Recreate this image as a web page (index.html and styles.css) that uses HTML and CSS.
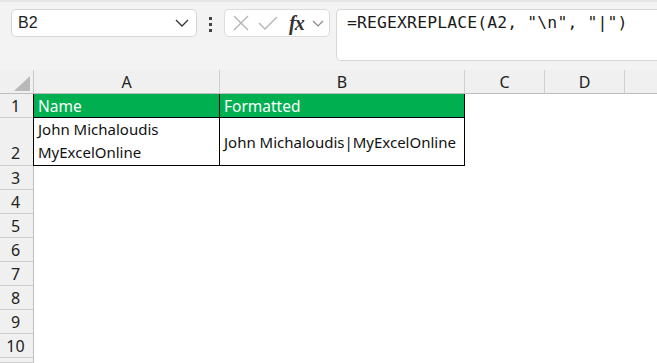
FILE: index.html
```html
<!DOCTYPE html>
<html lang="en">
<head>
    <meta charset="UTF-8">
    <title>REGEXREPLACE</title>
    <link rel="stylesheet" href="styles.css">
</head>
<body>

    <!-- Formula bar -->
    <div class="toolbar">
        <div class="name-box">
            <span>B2</span>
            <svg class="chev" width="14" height="8" viewBox="0 0 14 8"><path d="M1 1 L7 7 L13 1" fill="none" stroke="#333" stroke-width="1.3"/></svg>
        </div>
        <div class="dots"><i></i><i></i><i></i></div>
        <div class="fx-box">
            <svg width="18" height="18" viewBox="0 0 18 18"><path d="M2 2 L16 16 M16 2 L2 16" stroke="#b4b4b4" stroke-width="1.4" fill="none"/></svg>
            <svg width="20" height="16" viewBox="0 0 20 16"><path d="M1 8 L7 14 L19 2" stroke="#b4b4b4" stroke-width="1.4" fill="none"/></svg>
            <span class="fx">fx</span>
            <svg width="12" height="7" viewBox="0 0 12 7"><path d="M1 1 L6 6 L11 1" fill="none" stroke="#888" stroke-width="1.2"/></svg>
        </div>
        <div class="formula">=REGEXREPLACE(A2, "\n", "|")</div>
    </div>

    <!-- Sheet -->
    <div class="sheet">
        <div class="corner"><div class="tri"></div></div>
        <div class="col-head">A</div>
        <div class="col-head">B</div>
        <div class="col-head">C</div>
        <div class="col-head">D</div>
        <div class="col-head last"></div>

        <div class="row-head">1</div>
        <div class="cell head first">Name</div>
        <div class="cell head">Formatted</div>
        <div class="blank"></div><div class="blank"></div><div class="blank"></div>

        <div class="row-head bottom">2</div>
        <div class="cell first wrap">John Michaloudis<br>MyExcelOnline</div>
        <div class="cell mid">John Michaloudis|MyExcelOnline</div>
        <div class="blank"></div><div class="blank"></div><div class="blank"></div>

        <div class="row-head">3</div><div class="blank span"></div>
        <div class="row-head">4</div><div class="blank span"></div>
        <div class="row-head">5</div><div class="blank span"></div>
        <div class="row-head">6</div><div class="blank span"></div>
        <div class="row-head">7</div><div class="blank span"></div>
        <div class="row-head">8</div><div class="blank span"></div>
        <div class="row-head">9</div><div class="blank span"></div>
        <div class="row-head">10</div><div class="blank span"></div>
        <div class="row-head"></div><div class="blank span"></div>
    </div>

</body>
</html>
```

FILE: styles.css
```css
/* Page */
body {
    margin: 0;
    background-color: #ffffff;
    font-family: "Noto Sans", sans-serif;
    overflow: hidden;
    width: 657px;
    height: 363px;
}

/* Top bar */
.toolbar {
    display: flex;
    align-items: flex-start;
    background-color: #f3f3f3;
    border-top: 2px solid #e6e6e6;
    padding: 7px 0 0 11px;
    box-sizing: border-box;
    height: 70px;
}

.name-box {
    width: 186px;
    height: 28px;
    box-sizing: border-box;
    background: #fff;
    border: 1px solid #d6d6d6;
    border-radius: 5px;
    display: flex;
    align-items: center;
    justify-content: space-between;
    padding: 0 7px 0 6px;
    font-family: "Liberation Sans", sans-serif;
    font-size: 16px;
    color: #222;
}

.dots {
    width: 27px;
    display: flex;
    flex-direction: column;
    align-items: center;
    gap: 3px;
    padding-top: 8px;
}

.dots i {
    width: 3px;
    height: 3px;
    background: #444;
}

.fx-box {
    width: 106px;
    height: 28px;
    box-sizing: border-box;
    background: #fff;
    border: 1px solid #dcdcdc;
    border-radius: 5px;
    display: flex;
    align-items: center;
    gap: 8px;
    padding: 0 4px 0 7px;
}

.fx {
    font-family: "Liberation Serif", serif;
    font-style: italic;
    font-weight: bold;
    font-size: 20px;
    color: #333;
    margin-left: 3px;
    letter-spacing: -1px;
    line-height: 1;
}

.formula {
    margin-left: 6px;
    flex: 1;
    height: 52px;
    box-sizing: border-box;
    background: #fff;
    border: 1px solid #d6d6d6;
    border-right: none;
    border-radius: 5px 0 0 5px;
    padding: 3px 0 0 10px;
    font-family: "DejaVu Sans Mono", monospace;
    font-size: 16.4px;
    letter-spacing: 0.15px;
    color: #1a1a1a;
    white-space: pre;
}

/* Grid */
.sheet {
    display: grid;
    grid-template-columns: 34px 186px 245px 80px 80px 1fr;
    grid-template-rows: 24px 24px 48px repeat(8, 24px) 5px;
    font-size: 15px;
}

.corner,
.col-head,
.row-head {
    background-color: #f0f0f0;
    box-sizing: border-box;
    color: #222;
    font-size: 16px;
}

.corner {
    border-right: 1px solid #c8c8c8;
    border-bottom: 1px solid #bdbdbd;
    position: relative;
}

.tri {
    position: absolute;
    right: 3px;
    bottom: 2px;
    width: 0;
    height: 0;
    border-left: 16px solid transparent;
    border-bottom: 15px solid #b9b9b9;
}

.col-head {
    border-right: 1px solid #cfcfcf;
    border-bottom: 1px solid #bdbdbd;
    display: flex;
    align-items: center;
    justify-content: center;
    padding-top: 1px;
}

.col-head.last {
    border-right: none;
}

.row-head {
    border-right: 1px solid #bdbdbd;
    border-bottom: 1px solid #cfcfcf;
    display: flex;
    align-items: center;
    justify-content: center;
    padding-right: 2px;
}

.row-head.bottom {
    align-items: flex-end;
    padding-bottom: 1px;
}

.blank {
    background: #fff;
}

.blank.span {
    grid-column: 2 / 7;
}

.cell {
    box-sizing: border-box;
    border-right: 1px solid #000;
    border-bottom: 1px solid #000;
    padding: 0 4px;
    color: #111;
    display: flex;
    align-items: center;
    white-space: nowrap;
}

.cell.first {
    border-left: 1px solid #000;
    margin-left: -1px;
}

.cell.head {
    background-color: #00b050;
    color: #fff;
    font-size: 15.5px;
}

.cell.wrap {
    line-height: 23px;
    align-items: flex-end;
    padding-bottom: 1px;
}

.cell.mid {
    padding-top: 1px;
}
```
